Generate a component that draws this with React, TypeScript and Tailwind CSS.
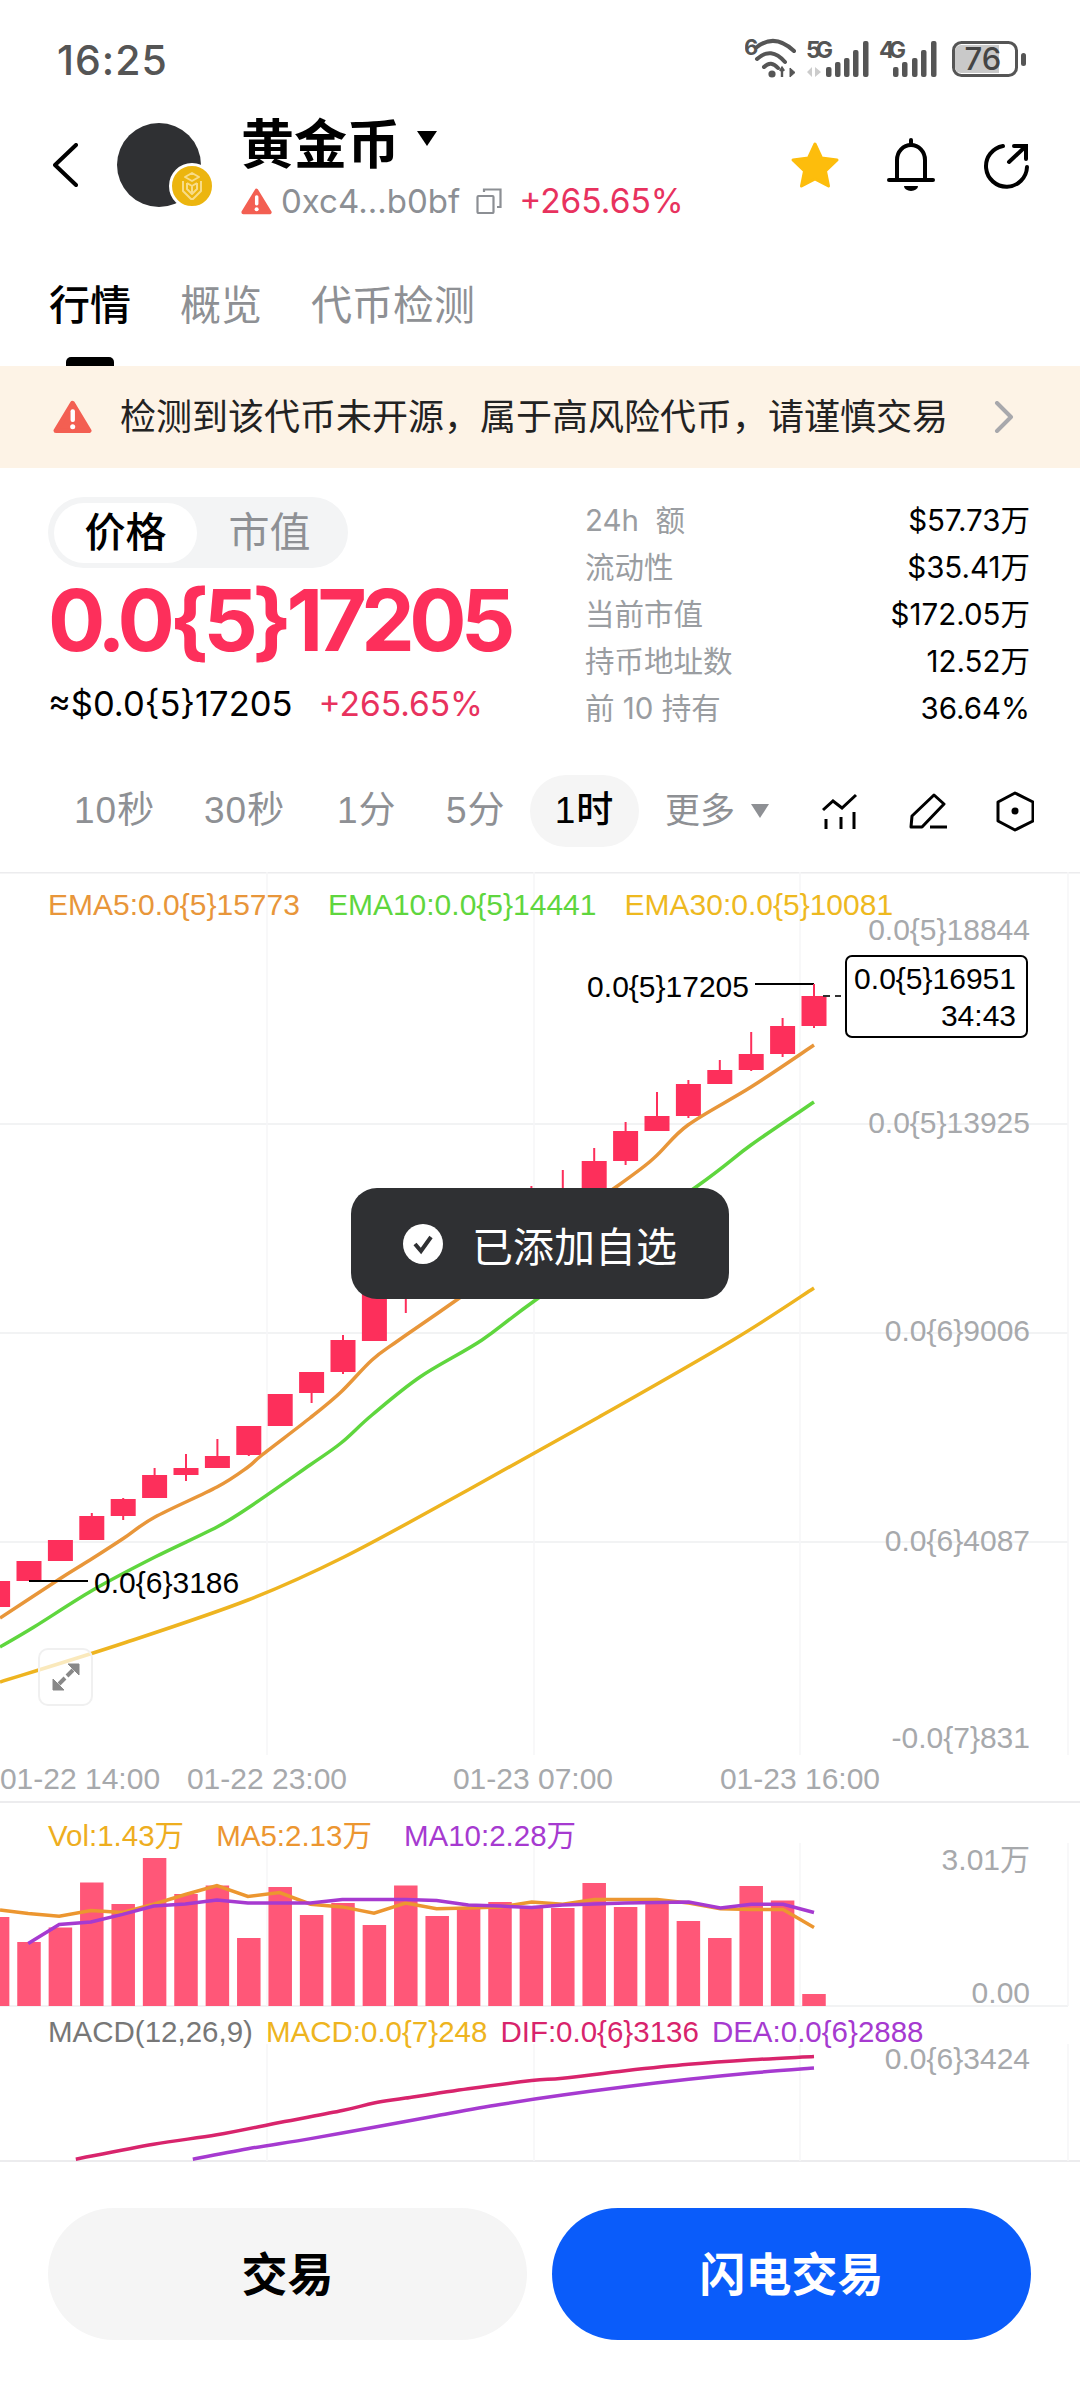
import React from "react";

const CAX = (k: number) => 814 - 31.4 * k;
const candles: number[][] = [
  [0, 996, 1026, 985, 1028], [1, 1026, 1054, 1018, 1057], [2, 1054, 1070, 1032, 1071], [3, 1070, 1084, 1060, 1084],
  [4, 1084, 1116, 1080, 1118], [5, 1116, 1131, 1092, 1131], [6, 1131, 1161, 1122, 1165], [7, 1161, 1190, 1148, 1190],
  [8, 1190, 1215, 1170, 1216], [9, 1215, 1235, 1186, 1238], [10, 1235, 1255, 1225, 1260], [11, 1255, 1265, 1245, 1270],
  [12, 1265, 1280, 1255, 1285], [13, 1280, 1292, 1270, 1313], [14, 1292, 1341, 1285, 1341], [15, 1340, 1372, 1335, 1374],
  [16, 1372, 1393, 1372, 1403], [17, 1394, 1426, 1394, 1426], [18, 1426, 1455, 1426, 1456], [19, 1456, 1468, 1439, 1468],
  [20, 1468, 1475, 1454, 1481], [21, 1475, 1498, 1468, 1498], [22, 1499, 1516, 1498, 1520], [23, 1516, 1540, 1513, 1540],
  [24, 1540, 1561, 1540, 1561], [25, 1561, 1581, 1561, 1581], [26, 1581, 1607, 1581, 1607],
];
const volTops = [1994, 1900.5, 1886, 1938, 1921, 1901, 1907, 1883, 1908, 1907, 1902, 1907, 1916, 1885.5, 1925, 1903, 1915, 1887, 1938, 1885.5, 1894, 1858, 1904, 1882.5, 1927.5, 1942, 1917];

function smooth(a: number[][]) {
  let d = `M${a[0][0]} ${a[0][1]}`;
  for (let i = 0; i < a.length - 1; i++) {
    const p0 = a[Math.max(i - 1, 0)], p1 = a[i], p2 = a[i + 1], p3 = a[Math.min(i + 2, a.length - 1)];
    const c1 = [p1[0] + (p2[0] - p0[0]) / 6, p1[1] + (p2[1] - p0[1]) / 6];
    const c2 = [p2[0] - (p3[0] - p1[0]) / 6, p2[1] - (p3[1] - p1[1]) / 6];
    d += ` C${c1[0].toFixed(1)} ${c1[1].toFixed(1)} ${c2[0].toFixed(1)} ${c2[1].toFixed(1)} ${p2[0]} ${p2[1]}`;
  }
  return d;
}
const pts = (a: number[][]) => a.map((p) => p.join(",")).join(" ");
const z5raw = (a: number[][]) => a.map(([x, y]) => [+(x / 1.452).toFixed(1), +(y / 2.667 + 1800).toFixed(1)]);
const z5 = (a: number[][]) => pts(z5raw(a));

const ema5 = [[814, 1045], [751, 1087], [688, 1125], [654, 1158], [616, 1187], [458, 1299], [399, 1340], [372, 1360], [341, 1392], [310, 1418], [262, 1455], [248, 1467], [217, 1487], [155, 1517], [124, 1538], [90, 1560], [58, 1580], [0, 1618]];
const ema10 = [[814, 1102], [751, 1145], [696, 1187], [537, 1299], [482, 1340], [420, 1377], [372, 1415], [341, 1443], [310, 1465], [248, 1508], [217, 1527], [155, 1557], [93, 1590], [34, 1627], [0, 1647]];
const ema30 = [[814, 1288], [733, 1340], [599, 1417], [468, 1490], [344, 1557], [248, 1600], [124, 1643], [0, 1682]];
const ma5 = [[1182, 340], [1137, 292], [1091, 292], [1046, 290], [1000, 275], [954, 265], [908, 265], [863, 265], [817, 278], [772, 272], [726, 285], [680, 288], [634, 290], [589, 275], [543, 302], [497, 285], [451, 278], [406, 247], [360, 257], [315, 228], [269, 252], [223, 278], [178, 300], [132, 295], [86, 310], [41, 303], [0, 293]];
const ma10 = [[1182, 300], [1137, 278], [1091, 278], [1046, 288], [1000, 272], [954, 273], [908, 275], [863, 277], [817, 280], [772, 287], [726, 283], [680, 280], [634, 268], [589, 265], [543, 265], [497, 265], [451, 275], [406, 275], [360, 275], [315, 267], [269, 277], [223, 283], [178, 305], [132, 325], [86, 332], [41, 383]];
const dif = [[1182, 684], [1091, 693], [1000, 705], [908, 722], [817, 742], [772, 748], [680, 770], [589, 795], [543, 808], [497, 828], [406, 860], [315, 893], [223, 918], [110, 958]];
const dea = [[1182, 715], [1091, 728], [1000, 745], [908, 765], [817, 787], [726, 812], [634, 842], [543, 873], [451, 903], [360, 930], [280, 958]];

const axis: [string, number][] = [["0.0{5}18844", 929], ["0.0{5}13925", 1122], ["0.0{6}9006", 1330], ["0.0{6}4087", 1540], ["-0.0{7}831", 1737], ["3.01万", 1859], ["0.00", 1992], ["0.0{6}3424", 2058]];
const xAxis: [string, number][] = [["01-22 14:00", 80], ["01-22 23:00", 267], ["01-23 07:00", 533], ["01-23 16:00", 800]];

const stats = [["24h  额", "$57.73万"], ["流动性", "$35.41万"], ["当前市值", "$172.05万"], ["持币地址数", "12.52万"], ["前 10 持有", "36.64%"]];

function StatusIcons() {
  const bars5 = [[826, 67], [835, 62], [844, 58], [853, 50], [863, 41]];
  const bars4 = [[893, 67], [902, 62], [912, 58], [921, 50], [931, 41]];
  return (
    <svg viewBox="745 35 285 50" className="w-[285px] h-[50px]" fill="none">
      <text x="744" y="55" fontSize="22" fontWeight="700" fill="#555">6</text>
      <g stroke="#555" strokeWidth="4" strokeLinecap="round">
        <path d="M757 47 Q775 33 794 51" />
        <path d="M757 59 Q771 46 785 62" />
        <path d="M764 67 Q771 60 778 68" />
      </g>
      <circle cx="772" cy="74" r="3.6" fill="#555" />
      <path d="M782 68 v9 M780 71 l2 -3 2 3" stroke="#555" strokeWidth="2.4" />
      <path d="M790 68 v9 l5 -4.500z" fill="#555" stroke="#555" />
      <text x="806" y="58" fontSize="23" fontWeight="700" fill="#555" textLength="27">5G</text>
      <path d="M812 67 v10 l-5 -5z M815 67 v10 l6 -5z" fill="#ccc" />
      {bars5.map(([x, y]) => <rect key={x} x={x} y={y} width="5.500" height={77 - y} rx="2" fill="#555" />)}
      <text x="879" y="58" fontSize="23" fontWeight="700" fill="#555" textLength="27">4G</text>
      {bars4.map(([x, y]) => <rect key={x} x={x} y={y} width="5.500" height={77 - y} rx="2" fill="#555" />)}
      <rect x="953.500" y="42.500" width="63" height="33" rx="8" stroke="#555" strokeWidth="3" />
      <path d="M961 45 H999 V73 H961 a6 6 0 0 1 -6 -6 V51 a6 6 0 0 1 6 -6z" fill="#c9c9c9" />
      <text x="983" y="70" fontSize="31" fontWeight="500" textAnchor="middle" fill="#444">76</text>
      <rect x="1021" y="53" width="5" height="13" rx="2.500" fill="#555" />
    </svg>
  );
}

function Warn({ w, h }: { w: number; h: number }) {
  return (
    <svg viewBox="0 0 40 34" width={w} height={h} className="shrink-0">
      <path d="M20 3 L37 31 H3 Z" fill="#f35f52" stroke="#f35f52" strokeWidth="5" strokeLinejoin="round" />
      <rect x="18" y="9" width="4.500" height="13" rx="2" fill="#fff" />
      <circle cx="20.200" cy="27" r="2.600" fill="#fff" />
    </svg>
  );
}

function Avatar() {
  return (
    <div className="relative w-[84px] h-[84px] rounded-full bg-[#2f3033] shrink-0">
      <div className="absolute left-[52px] top-[40px] w-[46px] h-[46px] rounded-full bg-[#ecb50f] border-[3px] border-white">
        <svg viewBox="0 0 40 40" className="w-full h-full" fill="none" stroke="#f8dc88" strokeWidth="2" strokeLinejoin="round">
          <path d="M20 7 L27 11 L20 15 L13 11 Z" />
          <path d="M11 15 L11 25 L19 33 L21 33 L29 25 L29 15" />
          <path d="M15 17 L20 20 L25 17 M20 20 V26 M15 17 V23 L20 28 L25 23 V17" />
        </svg>
      </div>
    </div>
  );
}

export default function App() {
  return (
    <div className="w-[1080px] h-[2388px] bg-white flex flex-col overflow-hidden font-['Inter','Noto_Sans_CJK_SC',sans-serif] text-black">
      {/* status bar */}
      <div className="h-[115px] pt-[5px] shrink-0 flex items-center justify-between pl-[57px] pr-[50px]">
        <span className="text-[41px] leading-[40px] font-medium text-[#555] tracking-[1px]">16:25</span>
        <StatusIcons />
      </div>

      {/* header */}
      <div className="h-[100px] shrink-0 flex items-center pl-[53px] pr-[50px]">
        <svg viewBox="0 0 25 44" className="w-[25px] h-[44px] shrink-0" fill="none" stroke="#000" strokeWidth="4" strokeLinecap="round" strokeLinejoin="round">
          <path d="M23 2 L2 22 L23 42" />
        </svg>
        <div className="ml-[39px]"><Avatar /></div>
        <div className="ml-[40px] pt-[7px] flex flex-col gap-[11px]">
          <div className="flex items-center h-[54px]">
            <span className="text-[53px] leading-[54px] font-bold">黄金币</span>
            <svg viewBox="0 0 20 15" className="w-[20px] h-[15px] ml-[17px] mb-[14px]"><path d="M0 0 H20 L10 15 Z" fill="#000" /></svg>
          </div>
          <div className="flex items-center h-[36px]">
            <Warn w={31} h={27} />
            <span className="ml-[9px] text-[33px] leading-[36px] text-[#8c8f94]">0xc4...b0bf</span>
            <svg viewBox="0 0 26 26" className="w-[26px] h-[26px] ml-[16px]" fill="none" stroke="#8c8f94" strokeWidth="2.200">
              <rect x="1.500" y="8" width="16" height="17" rx="1" />
              <path d="M8 4 V1.500 H24.500 V19 H21" />
            </svg>
            <span className="ml-[17px] text-[33.500px] leading-[36px] text-[#e8325e]">+265.65%</span>
          </div>
        </div>
        <svg viewBox="0 0 50 48" className="w-[50px] h-[48px] ml-auto shrink-0">
          <path d="M25 3 L31.500 17 L47 19 L35.500 30 L38.500 45 L25 38 L11.500 45 L14.500 30 L3 19 L18.500 17 Z" fill="#fdbd0c" stroke="#fdbd0c" strokeWidth="3" strokeLinejoin="round" />
        </svg>
        <svg viewBox="888 137 48 54" className="w-[48px] h-[54px] ml-[47px] shrink-0" fill="none" stroke="#000" strokeWidth="4">
          <path d="M898 179 V159 a14 15 0 0 1 28 0 V179" />
          <path d="M890 179 H934" strokeLinecap="round" />
          <path d="M912 144 V139" strokeLinecap="round" />
          <path d="M905 185 h14 a7 5 0 0 1 -14 0z" fill="#000" stroke="none" />
        </svg>
        <svg viewBox="985 143 47 47" className="w-[47px] h-[47px] ml-[48px] shrink-0" fill="none" stroke="#000" strokeWidth="4" strokeLinecap="round">
          <path d="M1005 147 A20.500 20.500 0 1 0 1029 168" />
          <path d="M1011 163 L1028 147 M1016 147 H1028 V160" />
        </svg>
      </div>

      {/* tabs */}
      <div className="h-[151px] shrink-0 pt-[70px] pl-[49px] flex items-start gap-[49px]">
        <div className="flex flex-col items-center">
          <span className="text-[41px] leading-[40px] font-medium">行情</span>
          <span className="mt-[32px] w-[48px] h-[9px] rounded-t-[5px] bg-black" />
        </div>
        <span className="text-[41px] leading-[40px] text-[#8e9094]">概览</span>
        <span className="text-[41px] leading-[40px] text-[#8e9094]">代币检测</span>
      </div>

      {/* banner */}
      <div className="h-[102px] shrink-0 bg-[#fdf3e6] flex items-center pl-[53px] pr-[66px]">
        <Warn w={39} h={34} />
        <span className="ml-[28px] text-[36px] leading-[40px] text-[#222]">检测到该代币未开源，属于高风险代币，请谨慎交易</span>
        <svg viewBox="0 0 20 32" className="w-[20px] h-[32px] ml-auto" fill="none" stroke="#a8a8ac" strokeWidth="4" strokeLinecap="round" strokeLinejoin="round">
          <path d="M3 2 L17 16 L3 30" />
        </svg>
      </div>

      {/* market */}
      <div className="h-[307px] shrink-0 flex justify-between pl-[48px] pr-[50px]">
        <div className="pt-[29px]">
          <div className="w-[300px] h-[71px] rounded-full bg-[#f3f4f5] p-[6px] flex items-center">
            <span className="w-[143px] h-[60px] rounded-full bg-white flex items-center justify-center text-[41px] font-medium">价格</span>
            <span className="flex-1 text-center text-[41px] text-[#8e9094]">市值</span>
          </div>
          <div className="mt-[10px] text-[85px] leading-[85px] font-bold text-[#fd2f5b] tracking-[-5.600px] whitespace-nowrap">0.0{"{5}"}17205</div>
          <div className="mt-[24px] h-[34px] flex items-center text-[34.500px] leading-[34px] whitespace-nowrap">
            <span>≈$0.0{"{5}"}17205</span>
            <span className="ml-[26px] text-[#e8325e] text-[33.500px]">+265.65%</span>
          </div>
        </div>
        <div className="w-[445px] pt-[29px]">
          {stats.map(([k, v]) => (
            <div key={k} className="h-[47px] flex items-center justify-between text-[29.500px]">
              <span className="text-[#9a9da1] whitespace-pre">{k}</span>
              <span>{v}</span>
            </div>
          ))}
        </div>
      </div>

      {/* periods */}
      <div className="h-[72px] shrink-0 flex items-center pl-[74px] text-[37px] tracking-[1px] text-[#8e9094] font-['Liberation_Sans','Noto_Sans_CJK_SC',sans-serif]">
        <span className="w-[79px] whitespace-nowrap">10秒</span>
        <span className="ml-[51px] w-[80px] whitespace-nowrap">30秒</span>
        <span className="ml-[53px] w-[59px] whitespace-nowrap">1分</span>
        <span className="ml-[50px] w-[60px] whitespace-nowrap">5分</span>
        <span className="ml-[24px] w-[109px] h-[72px] rounded-full bg-[#f5f5f5] text-black font-medium flex items-center justify-center whitespace-nowrap">1时</span>
        <span className="ml-[26px] w-[70px] text-[35px] tracking-normal whitespace-nowrap">更多</span>
        <svg viewBox="0 0 18 14" className="w-[18px] h-[14px] ml-[16px]"><path d="M0 0 H18 L9 14 Z" fill="#8e9094" /></svg>
        <svg viewBox="822 794 36 37" className="w-[36px] h-[37px] ml-[53px]" fill="none" stroke="#000" strokeWidth="3">
          <path d="M823 811 L833 802 L842 809 L856 796" />
          <path d="M826 820 V830 M841 818 V830 M854 813 V830" />
        </svg>
        <svg viewBox="909 792 39 36" className="w-[39px] h-[36px] ml-[51px]" fill="none" stroke="#000" strokeWidth="3" strokeLinejoin="round">
          <path d="M911 826 L912 815 L934 794 L944 803 L922 826 Z" />
          <path d="M930 826 H947" />
        </svg>
        <svg viewBox="995 792 38 41" className="w-[38px] h-[41px] ml-[48px]" fill="none" stroke="#000" strokeWidth="3" strokeLinejoin="round">
          <path d="M1014 794 L1032 803 V822 L1014 831 L997 822 V803 Z" />
          <circle cx="1014" cy="812" r="3.500" fill="#000" stroke="none" />
        </svg>
      </div>

      {/* chart */}
      <div className="relative mt-[25px] h-[1290px] shrink-0 overflow-hidden font-['Liberation_Sans','Noto_Sans_CJK_SC',sans-serif]">
        <svg viewBox="0 872 1080 1290" className="absolute inset-0 w-[1080px] h-[1290px]" fill="none">
          <g stroke="#f2f3f4" strokeWidth="2">
            <path d="M0 872.500 H1080 M0 1802 H1080 M0 2161 H1080" stroke="#ececee" />
            <path d="M0 1124 H1068 M0 1333 H1068 M0 1542 H1068 M0 2006 H1068" />
          </g>
          <g stroke="#f6f6f7" strokeWidth="1.500">
            <path d="M267 872 V1755 M534 872 V1755 M800 872 V1755 M1068 872 V1755" />
            <path d="M267 1843 V2006 M534 1843 V2006 M800 1843 V2006 M1068 1843 V2006" />
            <path d="M267 2044 V2161 M534 2044 V2161 M800 2044 V2161 M1068 2044 V2161" />
          </g>

          {candles.map(([k, a, b, c, d]) => (
            <g key={k}>
              <rect x={CAX(k) - 1} y={c} width="2" height={d - c} fill="#fd2f5b" />
              <rect x={CAX(k) - 12.500} y={a} width="25" height={b - a} fill="#fd2f5b" />
            </g>
          ))}
          <path d={smooth(ema5)} stroke="#e8963a" strokeWidth="3.500" />
          <path d={smooth(ema10)} stroke="#5fd63e" strokeWidth="3.500" />
          <path d={smooth(ema30)} stroke="#eeb420" strokeWidth="3.500" />

          <path d="M755 984 H814" stroke="#000" strokeWidth="2" />
          <path d="M814 984 V996" stroke="#fd2f5b" strokeWidth="2" />
          <path d="M823 996 H841" stroke="#333" strokeWidth="2" strokeDasharray="7 5" />
          <path d="M29 1581 H88" stroke="#000" strokeWidth="2" />

          {volTops.map((t, i) => (
            <rect key={i} x={CAX(i) - 11.750} y={t} width="23.500" height={2006 - t} fill="#ff5778" />
          ))}
          <polyline points={z5(ma5)} stroke="#ec9630" strokeWidth="3.500" />
          <polyline points={z5(ma10)} stroke="#a63ad0" strokeWidth="3.500" />
          <path d={smooth(z5raw(dif))} stroke="#d8246c" strokeWidth="3.500" />
          <path d={smooth(z5raw(dea))} stroke="#a63ad0" strokeWidth="3.500" />

          <g className="text-[30px]" fill="#a7a9ac">
            {axis.map(([t, y]) => (
              <text key={t} x="1030" y={y} textAnchor="end" dominantBaseline="central">{t}</text>
            ))}
            {xAxis.map(([t, x]) => (
              <text key={t} x={x} y="1778" textAnchor="middle" dominantBaseline="central">{t}</text>
            ))}
          </g>
          <text x="749" y="986" textAnchor="end" dominantBaseline="central" className="text-[30px]" fill="#000">0.0{"{5}"}17205</text>
          <text x="94" y="1582" dominantBaseline="central" className="text-[30px]" fill="#000">0.0{"{6}"}3186</text>
        </svg>

        <div className="absolute left-[48px] top-[16px] flex gap-[28px] text-[30px] leading-[34px] whitespace-nowrap">
          <span className="text-[#e8963a]">EMA5:0.0{"{5}"}15773</span>
          <span className="text-[#5fd63e]">EMA10:0.0{"{5}"}14441</span>
          <span className="text-[#eeb91f]">EMA30:0.0{"{5}"}10081</span>
        </div>

        <div className="absolute left-[845px] top-[83px] w-[183px] h-[83px] border-2 border-black rounded-[7px] bg-white flex flex-col items-end justify-center pr-[10px] text-[30px] leading-[37px]">
          <span>0.0{"{5}"}16951</span>
          <span>34:43</span>
        </div>

        <div className="absolute left-[38px] top-[776px] w-[55px] h-[58px] rounded-[10px] border-2 border-[#f0f0f0] bg-white/70 flex items-center justify-center">
          <svg viewBox="0 0 28 28" className="w-[28px] h-[28px]" fill="#888" stroke="#888">
            <path d="M27 1 L27 12 L16 1 Z M1 27 L1 16 L12 27 Z" strokeLinejoin="round" />
            <path d="M21 7 L15 13 M7 21 L13 15" strokeWidth="4" />
          </svg>
        </div>

        <div className="absolute left-[48px] top-[947px] flex gap-[32px] text-[29.500px] leading-[34px] whitespace-nowrap">
          <span className="text-[#eeae1f]">Vol:1.43万</span>
          <span className="text-[#ec9630]">MA5:2.13万</span>
          <span className="text-[#a63ad0]">MA10:2.28万</span>
        </div>

        <div className="absolute left-[48px] top-[1143px] flex gap-[13px] text-[29.500px] leading-[34px] whitespace-nowrap">
          <span className="text-[#777]">MACD(12,26,9)</span>
          <span className="text-[#eeb420]">MACD:0.0{"{7}"}248</span>
          <span className="text-[#d8246c]">DIF:0.0{"{6}"}3136</span>
          <span className="text-[#a63ad0]">DEA:0.0{"{6}"}2888</span>
        </div>

        <div className="absolute left-[351px] top-[316px] w-[378px] h-[111px] rounded-[26px] bg-[#2f3033] flex items-center pl-[52px] gap-[29px]">
          <svg viewBox="0 0 40 40" className="w-[40px] h-[40px] shrink-0">
            <circle cx="20" cy="20" r="20" fill="#fff" />
            <path d="M12 20 L18 27 L28 13" fill="none" stroke="#2f3033" strokeWidth="4" />
          </svg>
          <span className="text-[41px] leading-[44px] text-white font-['Noto_Sans_CJK_SC',sans-serif]">已添加自选</span>
        </div>
      </div>

      {/* footer */}
      <div className="flex-1 flex gap-[25px] pl-[48px] pr-[49px] pt-[46px]">
        <button className="w-[479px] h-[132px] rounded-full bg-[#f5f5f5] text-[46px] font-bold">交易</button>
        <button className="w-[479px] h-[132px] rounded-full bg-[#0a5cfa] text-[46px] font-bold text-white">闪电交易</button>
      </div>
    </div>
  );
}
